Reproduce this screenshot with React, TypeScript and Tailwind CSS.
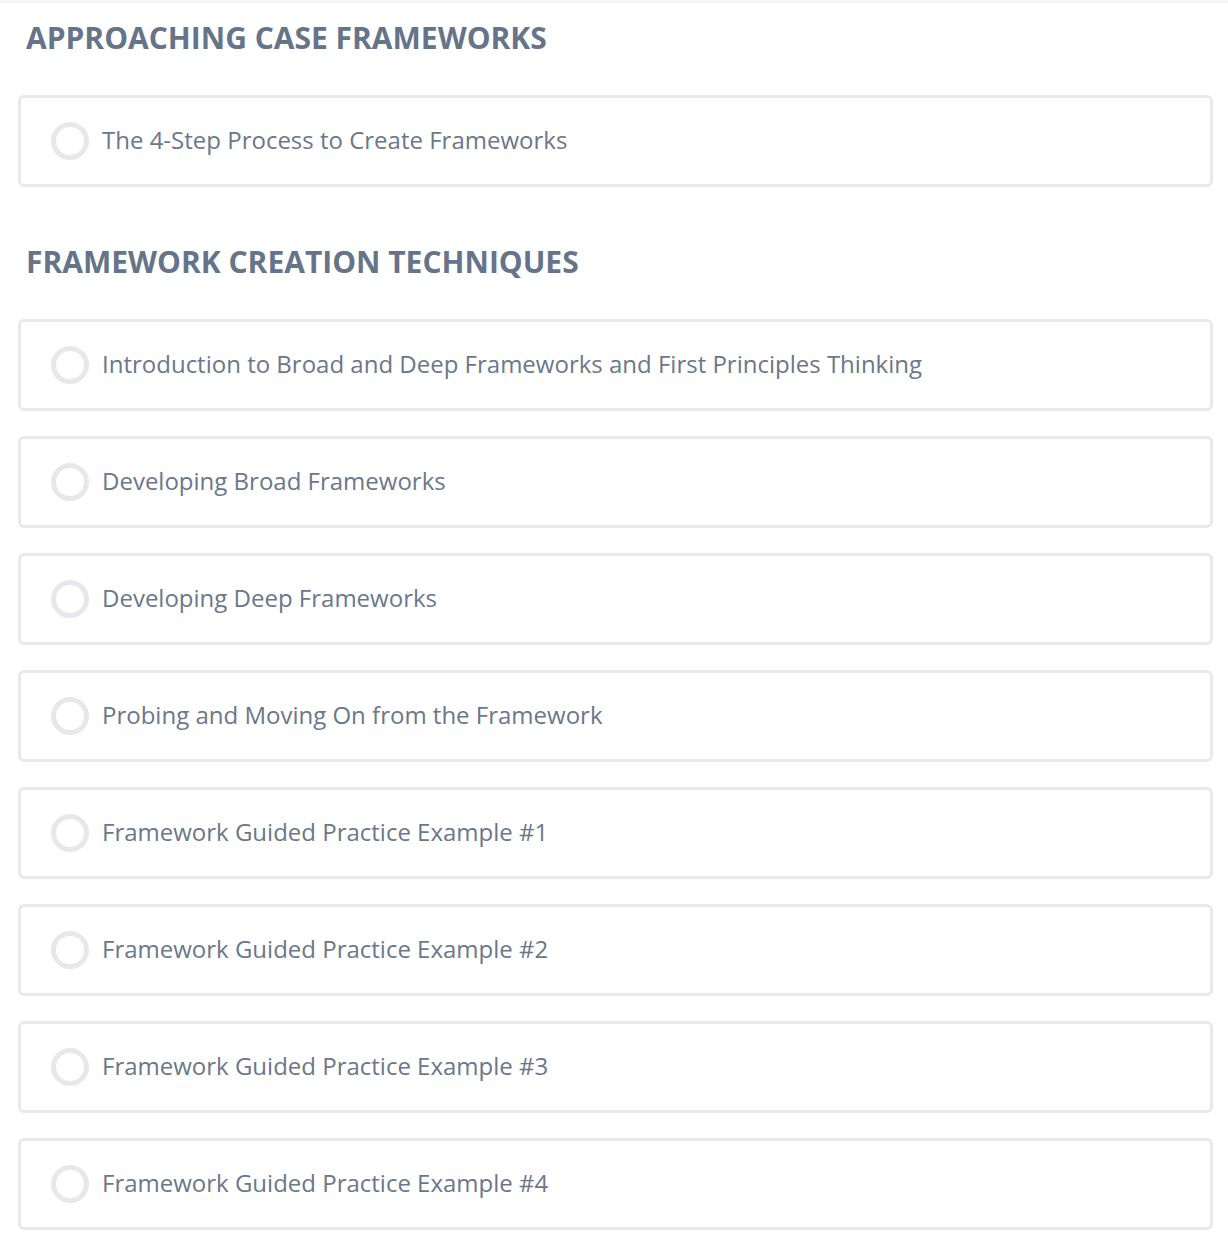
const sections = [
  {
    title: 'APPROACHING CASE FRAMEWORKS',
    lessons: ['The 4-Step Process to Create Frameworks'],
  },
  {
    title: 'FRAMEWORK CREATION TECHNIQUES',
    lessons: [
      'Introduction to Broad and Deep Frameworks and First Principles Thinking',
      'Developing Broad Frameworks',
      'Developing Deep Frameworks',
      'Probing and Moving On from the Framework',
      'Framework Guided Practice Example #1',
      'Framework Guided Practice Example #2',
      'Framework Guided Practice Example #3',
      'Framework Guided Practice Example #4',
    ],
  },
]

function LessonRow({ title }: { title: string }) {
  return (
    <div className="flex h-[92px] items-center rounded-md border-[3px] border-[#e8e9eb] bg-white pl-[30px]">
      <span className="h-[38px] w-[38px] shrink-0 rounded-full border-[5px] border-[#e6e8eb]" />
      <span className="ml-[13px] pb-[2px] text-[24px] leading-none text-[#6b778b]">{title}</span>
    </div>
  )
}

export default function App() {
  return (
    <div
      className="min-h-screen bg-white border-t-[3px] border-[#f3f4f5]"
      style={{ fontFamily: '"Open Sans", sans-serif' }}
    >
      <div className="pl-[18px] pr-[15px] pt-[15px]">
        {sections.map((section, i) => (
          <section key={section.title} className={i > 0 ? 'mt-[55px]' : ''}>
            <h2 className="pl-[8px] text-[30px] font-bold leading-[39px] text-[#66748a]">
              {section.title}
            </h2>
            <div className="mt-[38px] flex flex-col gap-[25px]">
              {section.lessons.map((lesson) => (
                <LessonRow key={lesson} title={lesson} />
              ))}
            </div>
          </section>
        ))}
      </div>
    </div>
  )
}
